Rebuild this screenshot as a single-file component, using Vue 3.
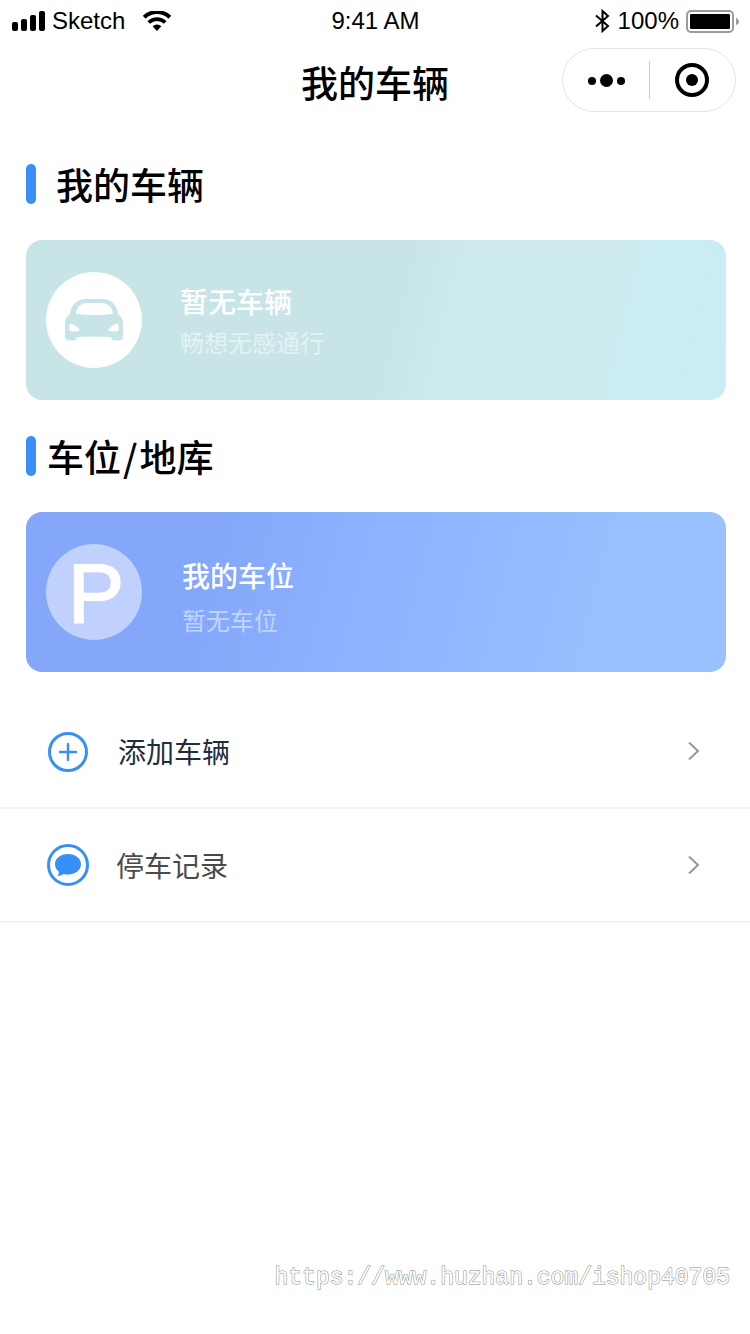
<script setup>
import { ref } from "vue";

const title = ref("我的车辆");
const records = [
    { name: "add", label: "添加车辆" },
    { name: "record", label: "停车记录" },
];
</script>

<template>
    <div class="page">
        <header>
            <div class="status-bar">
                <div class="status-left">
                    <svg class="signal" width="33" height="20" viewBox="0 0 33 20" aria-hidden="true">
                        <rect x="0" y="11" width="6" height="9" rx="2" />
                        <rect x="9" y="8" width="6" height="12" rx="2" />
                        <rect x="18" y="4" width="6" height="16" rx="2" />
                        <rect x="27" y="0" width="6" height="20" rx="2" />
                    </svg>
                    <span>Sketch</span>
                    <svg class="wifi" width="28" height="20" viewBox="0 0 28 20" aria-hidden="true">
                        <path d="M1.2 6.2 A18.5 18.5 0 0 1 26.8 6.2" fill="none" stroke="#000" stroke-width="4" />
                        <path d="M5.800 11.6 A11.4 11.4 0 0 1 22.200 11.6" fill="none" stroke="#000" stroke-width="3.6" />
                        <path d="M9.6 15.3 A6.4 6.4 0 0 1 18.4 15.3 L14 20 Z" />
                    </svg>
                </div>
                <span>9:41 AM</span>
                <div class="status-right">
                    <svg width="16" height="24" viewBox="0 0 16 24" aria-hidden="true">
                        <path d="M1 6.5 L13 17 L7.500 22 V2 L13 7 L1 17.5" fill="none" stroke="#000" stroke-width="2" />
                    </svg>
                    <span>100%</span>
                    <svg width="53" height="24" viewBox="0 0 53 24" aria-hidden="true">
                        <rect x="1" y="2" width="46" height="21" rx="4" fill="none" stroke="#9b9b9b" stroke-width="2" />
                        <rect x="4" y="5" width="40" height="15" rx="1" />
                        <path d="M50 9 Q53 10 53 12.5 Q53 15 50 16 Z" fill="#9b9b9b" />
                    </svg>
                </div>
            </div>
            <div class="nav-bar">
                <h1>{{ title }}</h1>
                <div class="capsule">
                    <button type="button" aria-label="更多">
                        <svg width="38" height="14" viewBox="0 0 38 14">
                            <circle cx="5" cy="8" r="4" />
                            <circle cx="19.5" cy="7.5" r="6.5" />
                            <circle cx="34" cy="8" r="4" />
                        </svg>
                    </button>
                    <button type="button" aria-label="关闭">
                        <svg width="34" height="34" viewBox="0 0 34 34">
                            <circle cx="17" cy="17" r="15" fill="none" stroke="#000" stroke-width="4" />
                            <circle cx="17" cy="17" r="6" />
                        </svg>
                    </button>
                </div>
            </div>
        </header>

        <main>
            <section>
                <h2>我的车辆</h2>
                <div class="card car">
                    <div class="avatar">
                        <svg width="58" height="42" viewBox="0 0 58 42" aria-hidden="true">
                            <path fill="#c7e4e7" fill-rule="evenodd" d="M21 0 H37 C46 0 52 6 53 15 C56 17 58 20 58 24 V37 Q58 41.5 54 41.5 H50 Q46.500 41.500 46 38 Q29 37 12 38 Q11.500 41.500 8 41.500 H4 Q0 41.500 0 37 V24 C0 20 2 17 5 15 C6 6 12 0 21 0 Z M22 4 C15 4 11 9 11 15 Q29 17 48 15 C48 9 43 4 36 4 Z M5 24.5 Q4 28 4.500 32 Q10 33 15 31.500 Q12 26 5 24.5 Z M53 24.5 Q54 28 53.500 32 Q48 33 43 31.500 Q46 26 53 24.5 Z" />
                        </svg>
                    </div>
                    <div class="info">
                        <h3>暂无车辆</h3>
                        <p>畅想无感通行</p>
                    </div>
                </div>
            </section>

            <section>
                <h2 class="near">
                    <span>车位<span class="slash">/</span>地库</span>
                </h2>
                <div class="card space">
                    <div class="avatar">P</div>
                    <div class="info">
                        <h3>我的车位</h3>
                        <p>暂无车位</p>
                    </div>
                </div>
            </section>

            <nav>
                <button v-for="item in records" :key="item.name" type="button" class="row" :class="item.name">
                    <svg v-if="item.name == 'add'" width="42" height="42" viewBox="0 0 42 42" aria-hidden="true">
                        <circle cx="21" cy="22" r="18.5" fill="none" stroke="#388ff7" stroke-width="3" />
                        <path d="M21 14 V30 M13 22 H29" stroke="#388ff7" stroke-width="2.4" stroke-linecap="round" />
                    </svg>
                    <svg v-else width="42" height="42" viewBox="0 0 42 42" aria-hidden="true">
                        <circle cx="21" cy="21" r="19.5" fill="none" stroke="#388ff7" stroke-width="3" />
                        <path d="M21 10 C28.500 10 34 14.500 34 20 C34 26 28.500 30.500 21 30.500 Q18.500 30.500 16.500 30 Q14 32 10.500 32 Q12 30.500 11.800 27.800 C9.500 26 8 23.500 8 20 C8 14.500 13.500 10 21 10 Z" fill="#388ff7" />
                    </svg>
                    <span class="label">{{ item.label }}</span>
                    <svg width="12" height="20" viewBox="0 0 12 20" aria-hidden="true">
                        <path d="M1 1.500 L10 10 L1 18.500" fill="none" stroke="#999" stroke-width="2" />
                    </svg>
                </button>
            </nav>
        </main>

        <footer>https://www.huzhan.com/ishop40705</footer>
    </div>
</template>

<style>
body {
    margin: 0;
    background: #fff;
}
</style>

<style scoped>
.page {
    display: flex;
    flex-direction: column;
    min-height: 100vh;
    color: #000;
    font-family: "Liberation Sans", "Noto Sans CJK SC", sans-serif;
}

h1,
h2,
h3,
p {
    margin: 0;
    font-weight: 500;
}

h1,
h2,
h3,
p,
.row {
    font-family: "Noto Sans CJK SC", sans-serif;
}

svg {
    display: block;
    flex: none;
}

button {
    padding: 0;
    border: 0;
    background: none;
    color: inherit;
    cursor: pointer;
}

.status-bar {
    display: grid;
    grid-template-columns: 1fr auto 1fr;
    align-items: center;
    height: 40px;
    padding: 0 11px 0 12px;
    font-size: 24px;
    line-height: 42px;
}

.status-left,
.status-right {
    display: flex;
    align-items: center;
    gap: 7px;
}

.status-right {
    justify-content: flex-end;
}

.wifi {
    margin-left: 11px;
}

.nav-bar {
    display: grid;
    grid-template-columns: 1fr auto 1fr;
    align-items: center;
    padding: 8px 14px 0;
}

.nav-bar h1 {
    grid-column: 2;
    padding-top: 4px;
    font-size: 37px;
    line-height: 40px;
}

.capsule {
    display: flex;
    justify-self: end;
    box-sizing: border-box;
    width: 174px;
    height: 64px;
    padding: 12px 0;
    border: 1px solid #e5e5e5;
    border-radius: 32px;
}

.capsule button {
    display: flex;
    flex: 1;
    align-items: center;
    justify-content: center;
}

.capsule button + button {
    border-left: 1px solid #ccc;
}

main {
    padding-top: 16px;
}

section {
    padding: 36px 24px 0 26px;
}

h2 {
    display: flex;
    gap: 20px;
    font-size: 37px;
    line-height: 40px;
}

h2::before {
    content: "";
    width: 10px;
    height: 40px;
    border-radius: 5px;
    background: #388ff7;
}

h2.near {
    gap: 11px;
}

.slash {
    padding: 0 2px;
}

.card {
    display: flex;
    box-sizing: border-box;
    height: 160px;
    margin-top: 36px;
    padding: 32px 20px;
    border-radius: 16px;
    color: #fff;
}

.car {
    gap: 38px;
    background: linear-gradient(104deg, #c7e4e7 0%, #c7e4e7 40%, #c6e3e6 51%, #cdeaed 61%, #cdebef 81%, #caecf3 85%, #c9edf3 100%);
}

.space {
    gap: 40px;
    background: linear-gradient(104deg, #84a7f9 0%, #84a7f9 25%, #8db2ff 48%, #9ac1ff 86%, #9ac1ff 100%);
}

.avatar {
    display: flex;
    flex: none;
    align-items: center;
    justify-content: center;
    box-sizing: border-box;
    width: 96px;
    height: 96px;
    border-radius: 50%;
    background: #fff;
}

.space .avatar {
    padding: 2px 0 0 4px;
    background: #c1d1fd;
    font-size: 84px;
    line-height: 96px;
    -webkit-text-stroke: 2px #fff;
}

.info {
    padding-top: 9px;
}

.info h3 {
    font-size: 28px;
    line-height: 40px;
}

.info p {
    padding-top: 1px;
    color: #e3f2f4;
    font-size: 24px;
    font-weight: 400;
    line-height: 40px;
}

.space .info {
    padding-top: 11px;
}

.space .info p {
    padding-top: 5px;
    color: #c1d5fd;
}

nav {
    padding-top: 23px;
}

.row {
    display: flex;
    align-items: center;
    gap: 27px;
    box-sizing: border-box;
    width: 100%;
    height: 114px;
    padding: 0 50px 0 47px;
    border-bottom: 2px solid #f2f2f2;
    color: #4a4a4a;
    font-size: 28px;
    line-height: 40px;
    text-align: left;
}

.add {
    gap: 29px;
    color: #1f2d3d;
}

.label {
    flex: 1;
}

footer {
    margin-top: auto;
    padding: 0 20px 41px;
    color: #fff;
    font-family: "Liberation Mono", monospace;
    font-size: 23px;
    line-height: 30px;
    text-align: right;
    -webkit-text-stroke: 1px #888;
    paint-order: stroke;
}
</style>
